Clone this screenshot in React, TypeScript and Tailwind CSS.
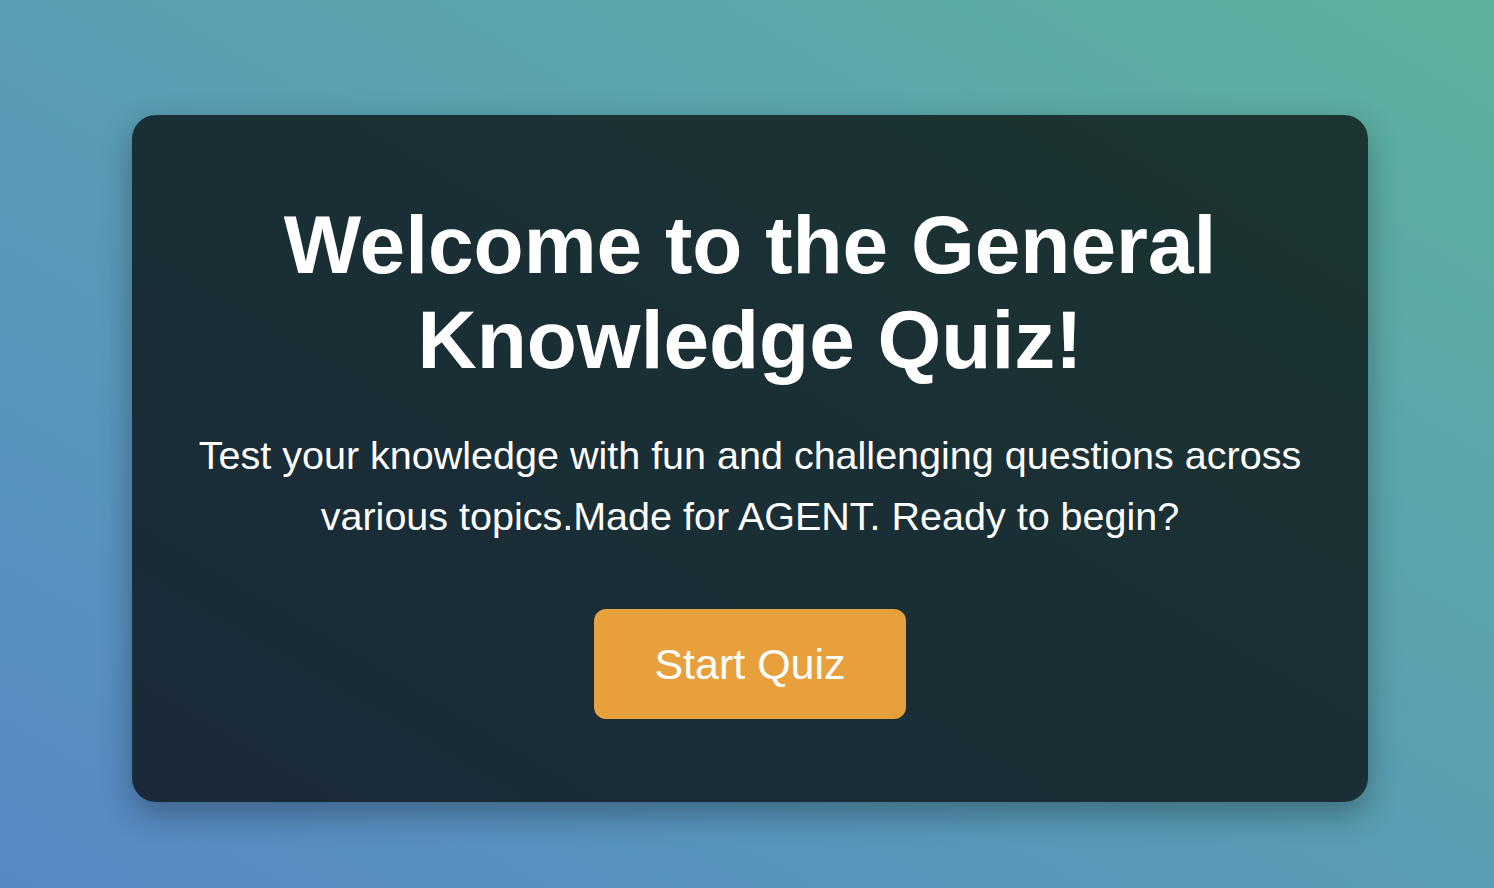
import React from 'react';

export default function App() {
  return (
    <div className="min-h-screen w-full bg-linear-to-tr from-[#5887c6] to-[#5cb29c] font-['Liberation_Sans',Arial,sans-serif] pt-[115px] pb-[86px] pl-[6px]">
      <div className="mx-auto w-[1236px] rounded-[24px] bg-black/70 shadow-[0_12px_32px_rgba(0,0,0,0.3)] px-[56px] pt-[82px] pb-[83px] text-center text-white">
        <h1 className="text-[82px] font-bold leading-[95px]">
          Welcome to the General
          <br />
          Knowledge Quiz!
        </h1>
        <p className="mt-[38px] text-[39.5px] leading-[61px]">
          Test your knowledge with fun and challenging questions across various topics.Made for AGENT. Ready to begin?
        </p>
        <button className="mt-[62px] h-[110px] w-[312px] rounded-[12px] bg-[#e8a03c] text-[43px] text-white">
          Start Quiz
        </button>
      </div>
    </div>
  );
}
